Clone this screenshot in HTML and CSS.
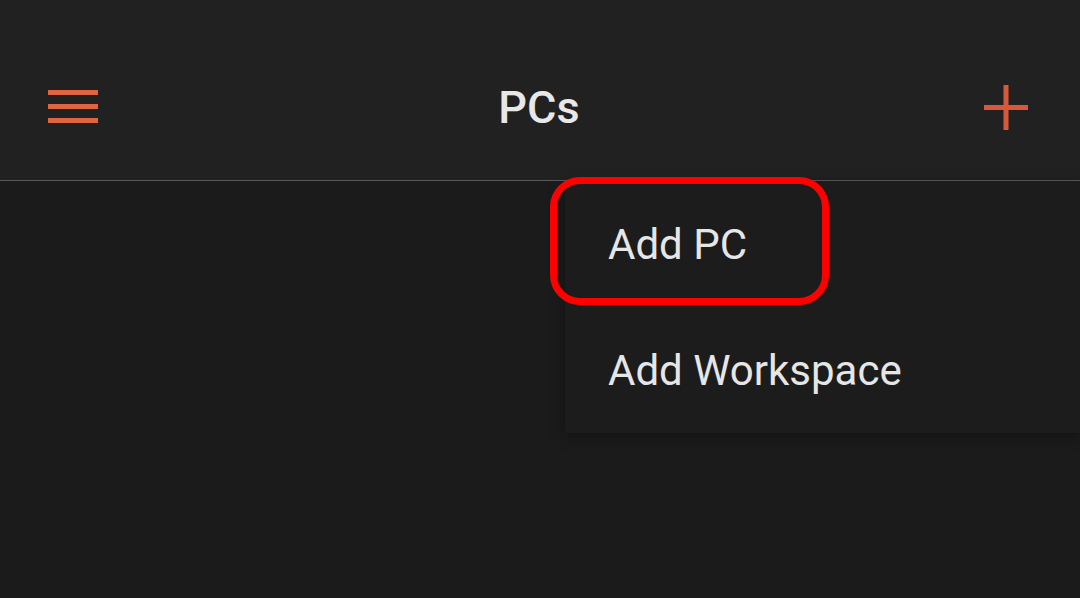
FILE: index.html
```html
<!DOCTYPE html>
<html lang="en">
<head>
  <meta charset="UTF-8">
  <meta name="viewport" content="width=device-width, initial-scale=1.0">
  <title>PCs</title>
  <link rel="stylesheet" href="styles.css">
</head>
<body>

<div id="app">
  <header class="toolbar">
    <button class="icon-btn menu-btn" aria-label="Menu">
      <svg width="50" height="34" viewBox="0 0 50 34">
        <rect x="0" y="0" width="50" height="5" fill="#e0643f"/>
        <rect x="0" y="14" width="50" height="5" fill="#e0643f"/>
        <rect x="0" y="28" width="50" height="5" fill="#e0643f"/>
      </svg>
    </button>
    <h1 class="title">PCs</h1>
    <button class="icon-btn add-btn" aria-label="Add">
      <svg width="44" height="45" viewBox="0 0 44 45">
        <rect x="19.5" y="0" width="5" height="45" fill="#d9583a"/>
        <rect x="0" y="20" width="44" height="5" fill="#d9583a"/>
      </svg>
    </button>
  </header>

  <main class="content"></main>

  <div class="popup-menu">
    <div class="menu-item">Add PC</div>
    <div class="menu-item">Add Workspace</div>
  </div>

  <div class="highlight"></div>
</div>

</body>
</html>
```

FILE: styles.css
```css
body {
  margin: 0;
  background-color: #1b1b1b;
  font-family: 'Roboto', 'Noto Sans', sans-serif;
  color: #e8e8e8;
}

#app {
  position: relative;
  width: 1080px;
  height: 598px;
  overflow: hidden;
}

.toolbar {
  height: 146px;
  padding: 34px 52px 0 48px;
  background-color: #212121;
  border-bottom: 1px solid #5a5a5a;
  display: flex;
  align-items: center;
  justify-content: space-between;
}

.icon-btn {
  background: none;
  border: none;
  padding: 0;
  display: flex;
  cursor: pointer;
}

.title {
  margin: 0 0 0 -4px;
  font-size: 45px;
  font-weight: 500;
  color: #e8e8e8;
}

.content {
  height: 417px;
}

.popup-menu {
  position: absolute;
  left: 565px;
  top: 181px;
  right: 0;
  background-color: #1c1c1c;
  box-shadow: 0 4px 14px rgba(0, 0, 0, 0.35);
}

.menu-item {
  height: 126px;
  display: flex;
  align-items: center;
  padding-left: 43px;
  font-size: 42px;
  color: #e6e6e6;
}

.highlight {
  position: absolute;
  left: 550px;
  top: 177px;
  width: 265px;
  height: 114px;
  border: 7px solid #ff0000;
  border-radius: 30px;
}
```
